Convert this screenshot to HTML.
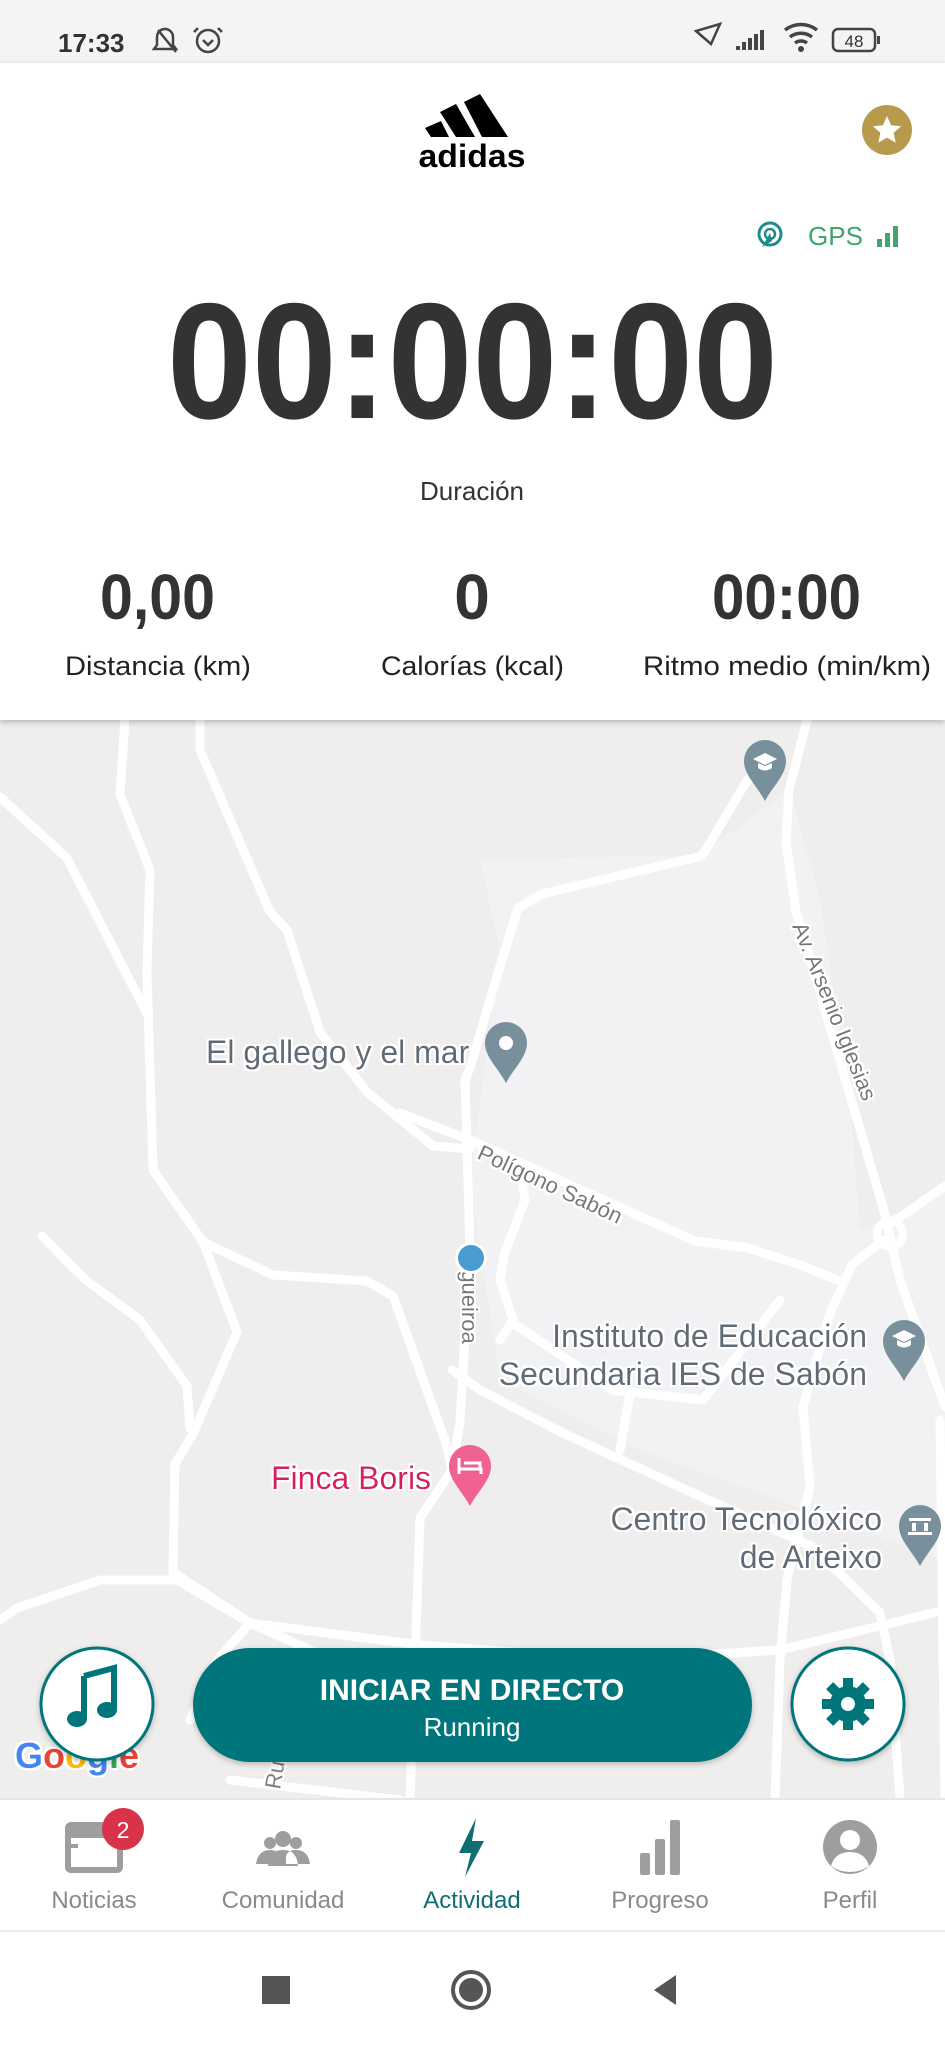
<!DOCTYPE html>
<html><head><meta charset="utf-8">
<style>
html,body{margin:0;padding:0;width:945px;height:2048px;overflow:hidden;background:#fff}
svg{display:block}
text{font-family:"Liberation Sans",Arial,sans-serif}
</style></head>
<body>
<svg width="945" height="2048" viewBox="0 0 945 2048" xmlns="http://www.w3.org/2000/svg">
<defs>
<filter id="sh" x="-20%" y="-20%" width="140%" height="160%"><feDropShadow dx="0" dy="2" stdDeviation="3" flood-color="#000" flood-opacity="0.25"/></filter>
<filter id="ts"><feMorphology operator="dilate" radius="2" in="SourceAlpha" result="d"/><feFlood flood-color="#fff"/><feComposite in2="d" operator="in" result="w"/><feMerge><feMergeNode in="w"/><feMergeNode in="SourceGraphic"/></feMerge></filter>
</defs>
<!-- map -->
<rect x="0" y="720" width="945" height="1078" fill="#efeeec"/>
<path d="M480 860 L700 855 L790 790 L820 900 L850 1100 L860 1230 L945 1190 L945 1560 L640 1450 L500 1380 L470 1180 L500 950 Z" fill="#f2f2f4"/>
<g fill="none" stroke="#fff" stroke-width="9" stroke-linecap="round" stroke-linejoin="round">
<path d="M0 797 L67 858 L147 1014"/>
<path d="M125 720 L120 795 L150 870 L147 972 L153 1170 L203 1242 L237 1332 L193 1434 L175 1464 L173 1572 L250 1623 L333 1660"/>
<path d="M200 720 L200 750 L270 912 L287 930 L320 1032 L367 1092 L433 1146 L470 1149"/>
<path d="M203 1242 L273 1275 L367 1281 L393 1296 L447 1446 L452 1470"/>
<path d="M42 1236 L87 1281 L140 1320 L187 1386 L190 1428"/>
<path d="M0 1620 L17 1608 L100 1580 L177 1580 L250 1623 L217 1660 L190 1720"/>
<path d="M807 720 L789 790 L786 842 L796 911 L852 1102 L883 1207 L900 1280 L945 1407"/>
<path d="M748 779 L702 856 L542 894 L518 908 L501 963 L470 1068 L465 1080 L470 1248 L460 1422 L452 1470 L420 1518 L415 1660 L410 1798"/>
<path d="M400 1113 L470 1140 L695 1241 L748 1248 L800 1265 L837 1280"/>
<path d="M890 1224 L945 1186"/>
<path d="M883 1240 L852 1265 L830 1313 L803 1407 L810 1487 L787 1580 L780 1660 L775 1798"/>
<path d="M522 1182 L525 1200 L504 1255 L500 1280 L513 1320 L500 1340"/>
<path d="M452 1370 L480 1390 L563 1433 L693 1493 L813 1547 L880 1613 L890 1660 L900 1798"/>
<path d="M513 1323 L613 1390 L703 1400 L780 1300"/>
<path d="M630 1393 L620 1450"/>
<path d="M250 1623 L420 1645 L620 1660 L780 1650 L945 1610"/>
<path d="M230 1780 L400 1800"/>
<path d="M940 1420 L945 1798"/>
</g>
<circle cx="890" cy="1234" r="13" fill="none" stroke="#fff" stroke-width="8"/>
<!-- map labels -->
<g fill="#5f6b76" font-size="32" filter="url(#ts)">
<text x="206" y="1063">El gallego y el mar</text>
<text x="867" y="1347" text-anchor="end">Instituto de Educación</text>
<text x="867" y="1385" text-anchor="end">Secundaria IES de Sabón</text>
<text x="882" y="1530" text-anchor="end">Centro Tecnolóxico</text>
<text x="882" y="1568" text-anchor="end">de Arteixo</text>
</g>
<text x="271" y="1489" font-size="32" fill="#d81b60" filter="url(#ts)">Finca Boris</text>
<g fill="#757575" font-size="22" filter="url(#ts)">
<text transform="translate(792,926) rotate(68)">Av. Arsenio Iglesias</text>
<text transform="translate(476,1158) rotate(25)">Polígono Sabón</text>
<text transform="translate(462,1252) rotate(90)">Figueiroa</text>
<text transform="translate(280,1790) rotate(-80)">Ru</text>
</g>
<!-- pins -->
<g fill="#78909c">
<path d="M506 1022 a21 21 0 0 1 21 21 c0 14 -13 25 -21 40 c-8 -15 -21 -26 -21 -40 a21 21 0 0 1 21 -21z"/>
<path d="M765 740 a21 21 0 0 1 21 21 c0 14 -13 25 -21 40 c-8 -15 -21 -26 -21 -40 a21 21 0 0 1 21 -21z"/>
<path d="M904 1320 a21 21 0 0 1 21 21 c0 14 -13 25 -21 40 c-8 -15 -21 -26 -21 -40 a21 21 0 0 1 21 -21z"/>
<path d="M920 1505 a21 21 0 0 1 21 21 c0 14 -13 25 -21 40 c-8 -15 -21 -26 -21 -40 a21 21 0 0 1 21 -21z"/>
</g>
<circle cx="506" cy="1043" r="7" fill="#fff"/>
<path d="M753 759 l12 -6 l12 6 l-12 6z M758 763 v5 q7 5 14 0 v-5 l-7 3z" fill="#fff"/>
<path d="M892 1336 l12 -6 l12 6 l-12 6z M897 1340 v5 q7 5 14 0 v-5 l-7 3z" fill="#fff"/>
<path d="M909 1518 h22 v3 h-22z M912 1523 h4 v8 h-4z M924 1523 h4 v8 h-4z M908 1532 h24 v3 h-24z" fill="#fff"/>
<path d="M470 1445 a21 21 0 0 1 21 21 c0 14 -13 25 -21 40 c-8 -15 -21 -26 -21 -40 a21 21 0 0 1 21 -21z" fill="#f06292"/>
<path d="M459 1458 v16 M459 1469 h22 v5 M464 1463 h16 v6" stroke="#fff" stroke-width="3" fill="none"/>
<circle cx="471" cy="1258" r="16" fill="#fff"/>
<circle cx="471" cy="1258" r="13" fill="#4a9cd0"/>
<!-- Google logo -->
<text x="15" y="1768" font-size="36" font-weight="bold" filter="url(#ts)"><tspan fill="#4285f4">G</tspan><tspan fill="#ea4335">o</tspan><tspan fill="#fbbc05">o</tspan><tspan fill="#4285f4">g</tspan><tspan fill="#34a853">l</tspan><tspan fill="#ea4335">e</tspan></text>
<!-- buttons -->
<circle cx="97" cy="1704" r="56" fill="#fff" stroke="#00767b" stroke-width="3" filter="url(#sh)"/>
<path d="M84 1676 L114 1668 V1708" fill="none" stroke="#00767b" stroke-width="6"/>
<path d="M84 1676 V1718" stroke="#00767b" stroke-width="6"/>
<ellipse cx="77" cy="1719" rx="10" ry="8" fill="#00767b"/>
<ellipse cx="107" cy="1710" rx="10" ry="8" fill="#00767b"/>
<rect x="193" y="1648" width="559" height="114" rx="57" fill="#00767b" filter="url(#sh)"/>
<text x="472" y="1700" font-size="30" font-weight="bold" fill="#fff" text-anchor="middle">INICIAR EN DIRECTO</text>
<text x="472" y="1736" font-size="26" fill="#fff" text-anchor="middle">Running</text>
<circle cx="848" cy="1704" r="56" fill="#fff" stroke="#00767b" stroke-width="3" filter="url(#sh)"/>
<g transform="translate(848,1704)" fill="#00767b">
<circle r="18"/>
<g id="t"><rect x="-5" y="-26" width="10" height="12"/></g>
<use href="#t" transform="rotate(45)"/><use href="#t" transform="rotate(90)"/><use href="#t" transform="rotate(135)"/><use href="#t" transform="rotate(180)"/><use href="#t" transform="rotate(225)"/><use href="#t" transform="rotate(270)"/><use href="#t" transform="rotate(315)"/>
<circle r="7" fill="#fff"/>
</g>
<!-- header -->
<rect x="0" y="0" width="945" height="63" fill="#f4f4f4"/>
<rect x="0" y="63" width="945" height="657" fill="#fff" filter="url(#sh)"/>
<rect x="0" y="63" width="945" height="657" fill="#fff"/>
<text x="58" y="52" font-size="26" font-weight="bold" fill="#333">17:33</text>
<g stroke="#444" stroke-width="2.5" fill="none">
<path d="M154 49 h22 l-3 -4 v-8 a8 8 0 0 0 -16 0 v8z M158 30 L176 52"/>
<circle cx="208" cy="41" r="11"/><path d="M203 40 l5 5 l5 -5 M198 28 l-4 4 M218 28 l4 4"/>
<path d="M711 44 l-15 -13 l24 -7 z"/>
<rect x="833" y="29" width="42" height="22" rx="5"/>
</g>
<path d="M736 50 h4 v-4 h-4z M742 50 h4 v-8 h-4z M748 50 h4 v-12 h-4z M754 50 h4 v-16 h-4z M760 50 h4 v-20 h-4z" fill="#444"/>
<path d="M785 30 a26 26 0 0 1 32 0 M790 37 a18 18 0 0 1 22 0 M795 43 a10 10 0 0 1 12 0" stroke="#444" stroke-width="3.5" fill="none"/>
<circle cx="801" cy="49" r="3" fill="#444"/>
<rect x="877" y="36" width="3" height="8" fill="#444"/>
<text x="854" y="47" font-size="17" fill="#333" text-anchor="middle">48</text>
<!-- adidas -->
<g fill="#000">
<polygon points="431,137 449,137 441,121 425,128"/>
<polygon points="456,137 475,137 456,104 440,112"/>
<polygon points="482,137 508,137 480,94 464,102"/>
</g>
<text x="472" y="167" font-size="32" font-weight="bold" fill="#000" text-anchor="middle" textLength="107" lengthAdjust="spacingAndGlyphs">adidas</text>
<circle cx="887" cy="130" r="25" fill="#b89a4d"/>
<path d="M887 116 l4.1 9.2 l10 1 l-7.5 6.7 l2.2 9.8 l-8.8 -5.1 l-8.8 5.1 l2.2 -9.8 l-7.5 -6.7 l10 -1z" fill="#fff"/>
<!-- GPS -->
<circle cx="770" cy="234" r="11" fill="none" stroke="#1e8c8c" stroke-width="3"/>
<circle cx="770" cy="234" r="5" fill="none" stroke="#1e8c8c" stroke-width="2.5"/>
<path d="M762 247 l8 -14 l2 8z" fill="#1e8c8c"/>
<text x="808" y="245" font-size="26" fill="#3fa56a">GPS</text>
<path d="M877 247 v-8 h5 v8z M885 247 v-14 h5 v14z M893 247 v-21 h5 v21z" fill="#3fa56a"/>
<!-- timer -->
<text x="167" y="418" font-size="165" font-weight="bold" fill="#333" textLength="611" lengthAdjust="spacingAndGlyphs">00:00:00</text>
<text x="472" y="500" font-size="26" fill="#333" text-anchor="middle">Duración</text>
<g font-size="64" font-weight="bold" fill="#333">
<text x="100" y="619" textLength="115" lengthAdjust="spacingAndGlyphs">0,00</text>
<text x="472" y="619" text-anchor="middle">0</text>
<text x="712" y="619" textLength="149" lengthAdjust="spacingAndGlyphs">00:00</text>
</g>
<g font-size="27" fill="#222">
<text x="65" y="675" textLength="186" lengthAdjust="spacingAndGlyphs">Distancia (km)</text>
<text x="381" y="675" textLength="183" lengthAdjust="spacingAndGlyphs">Calorías (kcal)</text>
<text x="643" y="675" textLength="288" lengthAdjust="spacingAndGlyphs">Ritmo medio (min/km)</text>
</g>
<!-- bottom nav -->
<rect x="0" y="1798" width="945" height="250" fill="#fff"/>
<rect x="0" y="1798" width="945" height="2" fill="#e6e6e6"/>
<rect x="0" y="1930" width="945" height="2" fill="#ececec"/>
<rect x="68" y="1825" width="52" height="45" rx="3" fill="none" stroke="#9e9e9e" stroke-width="6"/>
<rect x="68" y="1825" width="52" height="13" fill="#9e9e9e"/>
<rect x="71" y="1844" width="7" height="4" fill="#9e9e9e"/>
<circle cx="123" cy="1829" r="21" fill="#d9334a"/>
<text x="123" y="1838" font-size="23" fill="#fff" text-anchor="middle">2</text>
<g fill="#9e9e9e">
<circle cx="270" cy="1843" r="6"/><circle cx="296" cy="1843" r="6"/><circle cx="283" cy="1839" r="8"/>
<path d="M256 1864 q2 -14 14 -14 q8 0 10 6 v8z M310 1864 q-2 -14 -14 -14 q-8 0 -10 6 v8z M268 1866 q1 -16 15 -16 q14 0 15 16z"/>
<rect x="640" y="1853" width="10" height="22" rx="2"/><rect x="655" y="1839" width="10" height="36" rx="2"/><rect x="670" y="1820" width="10" height="55" rx="2"/>
<circle cx="850" cy="1847" r="27"/>
</g>
<circle cx="850" cy="1840" r="10" fill="#fff"/>
<path d="M831 1866 q4 -14 19 -14 q15 0 19 14 q-8 6 -19 6 q-11 0 -19 -6z" fill="#fff"/>
<path d="M476 1818 l-17 35 h12 l-6 24 l19 -36 h-12z" fill="#0e6e73"/>
<g font-size="24" fill="#8a8a8a" text-anchor="middle">
<text x="94" y="1908">Noticias</text>
<text x="283" y="1908">Comunidad</text>
<text x="472" y="1908" fill="#0e6e73">Actividad</text>
<text x="660" y="1908">Progreso</text>
<text x="850" y="1908">Perfil</text>
</g>
<!-- system nav -->
<rect x="262" y="1976" width="28" height="28" fill="#555"/>
<circle cx="471" cy="1990" r="18" fill="none" stroke="#555" stroke-width="4"/>
<circle cx="471" cy="1990" r="12" fill="#555"/>
<path d="M676 1975 v30 l-22 -15z" fill="#555"/>
</svg>
</body></html>
